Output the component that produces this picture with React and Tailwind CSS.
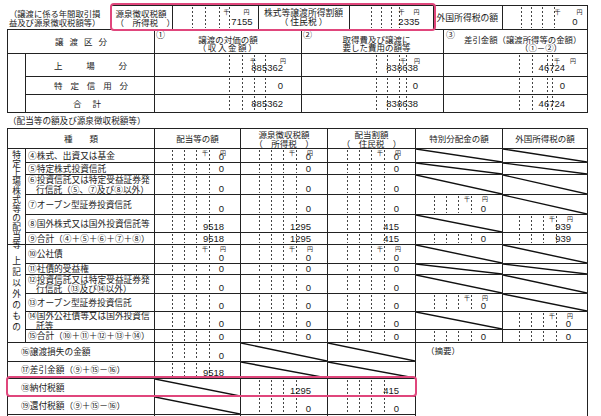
import React from 'react';

const B = 'border border-[#222]';

// dash offsets (from right), 千/円 positions, number padding for each kind of amount box
const TA = { d: ['right-[65px]', 'right-[52px]', 'right-[38px]', 'right-[28px]'], k: 'right-[28px]', y: 'right-[8px]', pr: 'pr-[5px]', t: 'top-[3px]', pb: 'pb-[3px]' };
const TB = { d: ['right-[61px]', 'right-[51px]', 'right-[41px]', 'right-[33px]'], k: 'right-[28px]', y: 'right-[13px]', pr: 'pr-[13px]', t: 'top-[3px]', pb: 'pb-[3px]' };
const TC = { d: ['right-[65px]', 'right-[55px]', 'right-[44px]', 'right-[32px]'], k: 'right-[26px]', y: 'right-[4px]', pr: 'pr-[9px]', t: 'top-[3px]', pb: 'pb-[3px]' };
const S1A = { d: ['right-[71px]', 'right-[58px]', 'right-[46px]', 'right-[35px]'], k: 'right-[45px]', y: 'right-[15px]', pr: 'pr-[18px]', t: 'top-[4px]', pb: 'pb-[4px]' };
const S1B = { d: ['right-[66px]', 'right-[55px]', 'right-[43px]', 'right-[36px]'], k: 'right-[37px]', y: 'right-[23px]', pr: 'pr-[25px]', t: 'top-[4px]', pb: 'pb-[4px]' };
const S1C = { d: ['right-[67px]', 'right-[54px]', 'right-[39px]', 'right-[34px]'], k: 'right-[27px]', y: 'right-[11px]', pr: 'pr-[22px]', t: 'top-[4px]', pb: 'pb-[4px]' };
const S2 = { d: ['right-[67px]', 'right-[55px]', 'right-[43px]', 'right-[30px]'], k: 'right-[32px]', y: 'right-[14px]', pr: 'pr-[16px]', t: 'top-[1px]', pb: 'pb-[1px]' };

function Val({ v, u, s }) {
    return (
        <td className={`relative ${B} p-0 align-bottom`}>
            {s.d.map((c) => (
                <span key={c} className={`absolute inset-y-[1px] w-px bg-[linear-gradient(to_bottom,#444_50%,transparent_50%)] bg-[length:1px_4px] ${c}`} />
            ))}
            {u && (
                <>
                    <span className={`absolute text-[6px] leading-[6px] ${s.t} ${s.k}`}>千</span>
                    <span className={`absolute text-[6px] leading-[6px] ${s.t} ${s.y}`}>円</span>
                </>
            )}
            <div className={`relative h-[9px] text-right font-['Liberation_Sans',sans-serif] text-[9.5px] leading-[9px] ${s.pr} ${s.pb} box-content`}>{v}</div>
        </td>
    );
}

function Diag() {
    return (
        <td className={`relative ${B} p-0`}>
            <svg className="absolute inset-0 h-full w-full" viewBox="0 0 100 100" preserveAspectRatio="none">
                <line x1="0" y1="0" x2="100" y2="100" stroke="#111" strokeWidth="1.4" vectorEffect="non-scaling-stroke" />
            </svg>
        </td>
    );
}

// height-neutral wrapper: text is centred in the cell without growing the row
function Mid({ children, className = '' }) {
    return (
        <div className={`flex h-0 items-center ${className}`}>
            <div className="w-full">{children}</div>
        </div>
    );
}

function Lab({ children, wide }) {
    return (
        <td colSpan={wide ? 2 : 1} className={`${B} p-0`}>
            <Mid className={`${wide ? 'pl-[13px]' : 'pl-[2px]'} text-[8.7px] leading-[9.5px] whitespace-nowrap`}>{children}</Mid>
        </td>
    );
}

function Vert({ text, rows, h }) {
    return (
        <td rowSpan={rows} className={`${B} p-0`}>
            <Mid>
                <div className={`flex flex-col items-center justify-between text-[8.7px] leading-[9px] ${h}`}>
                    {text.split('').map((c, i) => <span key={i}>{c}</span>)}
                </div>
            </Mid>
        </td>
    );
}

function Head({ children, className = '' }) {
    return (
        <td className={`${B} p-0`}>
            <Mid className={`text-center text-[8.5px] leading-[8.5px] whitespace-nowrap ${className}`}>{children}</Mid>
        </td>
    );
}

export default function App() {
    return (
        <div className="relative h-[416px] w-[601px] overflow-hidden bg-white pl-[7px] pt-[5px] font-['Noto_Sans_CJK_JP','Noto_Sans',sans-serif] text-[#1a1a1a]">

            {/* 年間取引損益 header strip */}
            <table className="w-[580px] table-fixed border-collapse">
                <colgroup>
                    <col className="w-[104px]" />
                    <col className="w-[61px]" />
                    <col className="w-[86px]" />
                    <col className="w-[91px]" />
                    <col className="w-[84px]" />
                    <col className="w-[69px]" />
                    <col className="w-[85px]" />
                </colgroup>
                <tbody>
                    <tr className="h-[24px]">
                        <td className="p-0"><Mid className="pl-[2px] text-[8.3px] leading-[8.5px] whitespace-nowrap">（譲渡に係る年間取引損<br />益及び源泉徴収税額等）</Mid></td>
                        <td className={`${B} p-0`}><Mid className="pl-[4px] text-[8.5px] leading-[8.5px] whitespace-nowrap">源泉徴収税額<br />（　所得税　）</Mid></td>
                        <Val v="7155" u s={TA} />
                        <Head className="text-[8.8px]">株式等譲渡所得割額<br />（ 住民税 ）</Head>
                        <Val v="2335" u s={TB} />
                        <td className={`${B} p-0`}><Mid className="pl-[3px] text-[8.8px] whitespace-nowrap">外国所得税の額</Mid></td>
                        <Val v="0" u s={TC} />
                    </tr>
                </tbody>
            </table>

            {/* 譲渡区分 */}
            <table className="-mt-px w-[580px] table-fixed border-collapse">
                <colgroup>
                    <col className="w-[18px]" />
                    <col className="w-[129px]" />
                    <col className="w-[147px]" />
                    <col className="w-[142px]" />
                    <col className="w-[144px]" />
                </colgroup>
                <tbody className="text-[8.5px]">
                    <tr className="h-[24px]">
                        <td colSpan={2} className={`${B} p-0`}><Mid className="pl-[6px] text-center tracking-[6px]">譲渡区分</Mid></td>
                        <td className={`relative ${B} p-0 align-top`}>
                            <span className="absolute left-[1px] top-0 text-[9px] leading-[9px]">①</span>
                            <div className="h-[17px] pt-[5px] text-center leading-[8px] box-content">譲渡の対価の額<br /><span className="tracking-[1.6px]">（収入金額）</span></div>
                        </td>
                        <td className={`relative ${B} p-0 align-top`}>
                            <span className="absolute left-[1px] top-0 text-[9px] leading-[9px]">②</span>
                            <div className="h-[17px] pl-[8px] pt-[5px] text-center leading-[8px] box-content">取得費及び譲渡に<br />要した費用の額等</div>
                        </td>
                        <td className={`relative ${B} p-0 align-top`}>
                            <span className="absolute left-[2px] top-0 text-[9px] leading-[9px]">③</span>
                            <div className="h-[17px] pt-[5px] text-[8.4px] leading-[8px] whitespace-nowrap box-content">
                                <div className="pl-[20px]">差引金額（譲渡所得等の金額）</div>
                                <div className="pl-[76px]">（①－②）</div>
                            </div>
                        </td>
                    </tr>
                    <tr className="h-[23px]">
                        <td rowSpan={3} className={`${B} p-0`}></td>
                        <td className={`${B} p-0`}><Mid><div className="flex justify-between pl-[28px] pr-[27px]"><span>上</span><span>場</span><span>分</span></div></Mid></td>
                        <Val v="885362" u s={S1A} />
                        <Val v="838638" u s={S1B} />
                        <Val v="46724" u s={S1C} />
                    </tr>
                    <tr className="h-[18px]">
                        <td className={`${B} p-0`}><Mid><div className="flex justify-between pl-[28px] pr-[26px]"><span>特</span><span>定</span><span>信</span><span>用</span><span>分</span></div></Mid></td>
                        <Val v="0" s={S1A} />
                        <Val v="0" s={S1B} />
                        <Val v="0" s={S1C} />
                    </tr>
                    <tr className="h-[18px]">
                        <td className={`${B} p-0`}><Mid><div className="flex justify-center gap-[11px] pr-[6px]"><span>合</span><span>計</span></div></Mid></td>
                        <Val v="885362" s={S1A} />
                        <Val v="838638" s={S1B} />
                        <Val v="46724" s={S1C} />
                    </tr>
                </tbody>
            </table>

            <div className="flex h-[15px] items-center pl-[1px] text-[8.6px] leading-[9px]">（配当等の額及び源泉徴収税額等）</div>

            {/* 配当等 */}
            <table className="w-[580px] table-fixed border-collapse">
                <colgroup>
                    <col className="w-[18px]" />
                    <col className="w-[129px]" />
                    <col className="w-[86px]" />
                    <col className="w-[87px]" />
                    <col className="w-[88px]" />
                    <col className="w-[87px]" />
                    <col className="w-[85px]" />
                </colgroup>
                <tbody>
                    <tr className="h-[20px]">
                        <td colSpan={2} className={`${B} p-0`}><Mid className="text-center text-[8.5px]">種　　類</Mid></td>
                        <Head>配当等の額</Head>
                        <Head>源泉徴収税額<br />（　所得税　）</Head>
                        <Head>配当割額<br />（　住民税　）</Head>
                        <Head>特別分配金の額</Head>
                        <Head>外国所得税の額</Head>
                    </tr>
                    <tr className="h-[14px]">
                        <Vert text="特定上場株式等の配当等" rows={6} h="h-[93px]" />
                        <Lab>④株式、出資又は基金</Lab>
                        <Val v="0" u s={S2} /><Val v="0" u s={S2} /><Val v="0" u s={S2} />
                        <Diag /><Diag />
                    </tr>
                    <tr className="h-[12px]">
                        <Lab>⑤特定株式投資信託</Lab>
                        <Val v="0" s={S2} /><Val v="0" s={S2} /><Val v="0" s={S2} />
                        <Diag /><Diag />
                    </tr>
                    <tr className="h-[20px]">
                        <Lab>⑥投資信託又は特定受益証券発<br /><span className="pl-[8px]">行信託（⑤、⑦及び⑧以外）</span></Lab>
                        <Val v="0" s={S2} /><Val v="0" s={S2} /><Val v="0" s={S2} />
                        <Diag /><Diag />
                    </tr>
                    <tr className="h-[20px]">
                        <Lab>⑦オープン型証券投資信託</Lab>
                        <Val v="0" s={S2} /><Val v="0" s={S2} /><Val v="0" s={S2} />
                        <Val v="0" u s={S2} /><Diag />
                    </tr>
                    <tr className="h-[18px]">
                        <Lab>⑧国外株式又は国外投資信託等</Lab>
                        <Val v="9518" s={S2} /><Val v="1295" s={S2} /><Val v="415" s={S2} />
                        <Diag /><Val v="939" u s={S2} />
                    </tr>
                    <tr className="h-[12px]">
                        <Lab>⑨合計（④＋⑤＋⑥＋⑦＋⑧）</Lab>
                        <Val v="9518" s={S2} /><Val v="1295" s={S2} /><Val v="415" s={S2} />
                        <Val v="0" s={S2} /><Val v="939" s={S2} />
                    </tr>
                    <tr className="h-[19px]">
                        <Vert text="上記以外のもの" rows={6} h="h-[76px]" />
                        <Lab>⑩公社債</Lab>
                        <Val v="0" u s={S2} /><Val v="0" u s={S2} /><Val v="0" u s={S2} />
                        <Diag /><Diag />
                    </tr>
                    <tr className="h-[11px]">
                        <Lab>⑪社債的受益権</Lab>
                        <Val v="0" s={S2} /><Val v="0" s={S2} /><Val v="0" s={S2} />
                        <Diag /><Diag />
                    </tr>
                    <tr className="h-[19px]">
                        <Lab>⑫投資信託又は特定受益証券発<br /><span className="pl-[8px]">行信託（⑬及び⑭以外）</span></Lab>
                        <Val v="0" s={S2} /><Val v="0" s={S2} /><Val v="0" s={S2} />
                        <Diag /><Diag />
                    </tr>
                    <tr className="h-[18px]">
                        <Lab>⑬オープン型証券投資信託</Lab>
                        <Val v="0" s={S2} /><Val v="0" s={S2} /><Val v="0" s={S2} />
                        <Val v="0" u s={S2} /><Diag />
                    </tr>
                    <tr className="h-[18px]">
                        <Lab>⑭国外公社債等又は国外投資信<br /><span className="pl-[8px]">託等</span></Lab>
                        <Val v="0" s={S2} /><Val v="0" s={S2} /><Val v="0" s={S2} />
                        <Diag /><Val v="0" u s={S2} />
                    </tr>
                    <tr className="h-[13px]">
                        <Lab>⑮合計（⑩＋⑪＋⑫＋⑬＋⑭）</Lab>
                        <Val v="0" s={S2} /><Val v="0" s={S2} /><Val v="0" s={S2} />
                        <Val v="0" s={S2} /><Val v="0" s={S2} />
                    </tr>
                    <tr className="h-[19px]">
                        <Lab wide>⑯譲渡損失の金額</Lab>
                        <Val v="0" s={S2} />
                        <Diag /><Diag />
                        <td colSpan={2} rowSpan={5} className={`${B} p-0 align-top`}>
                            <div className="h-[10px] pl-[10px] pt-[3px] text-[8.5px] leading-[9px] box-content">（摘要）</div>
                        </td>
                    </tr>
                    <tr className="h-[17px]">
                        <Lab wide>⑰差引金額（⑨＋⑮－⑯）</Lab>
                        <Val v="9518" s={S2} />
                        <Diag /><Diag />
                    </tr>
                    <tr className="h-[18px]">
                        <Lab wide>⑱納付税額</Lab>
                        <Diag />
                        <Val v="1295" s={S2} /><Val v="415" s={S2} />
                    </tr>
                    <tr className="h-[18px]">
                        <Lab wide>⑲還付税額（⑨＋⑮－⑯）</Lab>
                        <Diag />
                        <Val v="0" s={S2} /><Val v="0" s={S2} />
                    </tr>
                    <tr className="h-[12px]">
                        <td colSpan={2} className={`${B} p-0`}></td>
                        <td className={`${B} p-0`}></td>
                        <td className={`${B} p-0`}></td>
                        <td className={`${B} p-0`}></td>
                    </tr>
                </tbody>
            </table>

            {/* highlight boxes */}
            <div className="pointer-events-none absolute left-[110px] top-[3px] h-[28px] w-[326px] rounded-[4px] border-2 border-[#e0467c]" />
            <div className="pointer-events-none absolute left-[6px] top-[376px] h-[21px] w-[411px] rounded-[4px] border-2 border-[#e0467c]" />
        </div>
    );
}
